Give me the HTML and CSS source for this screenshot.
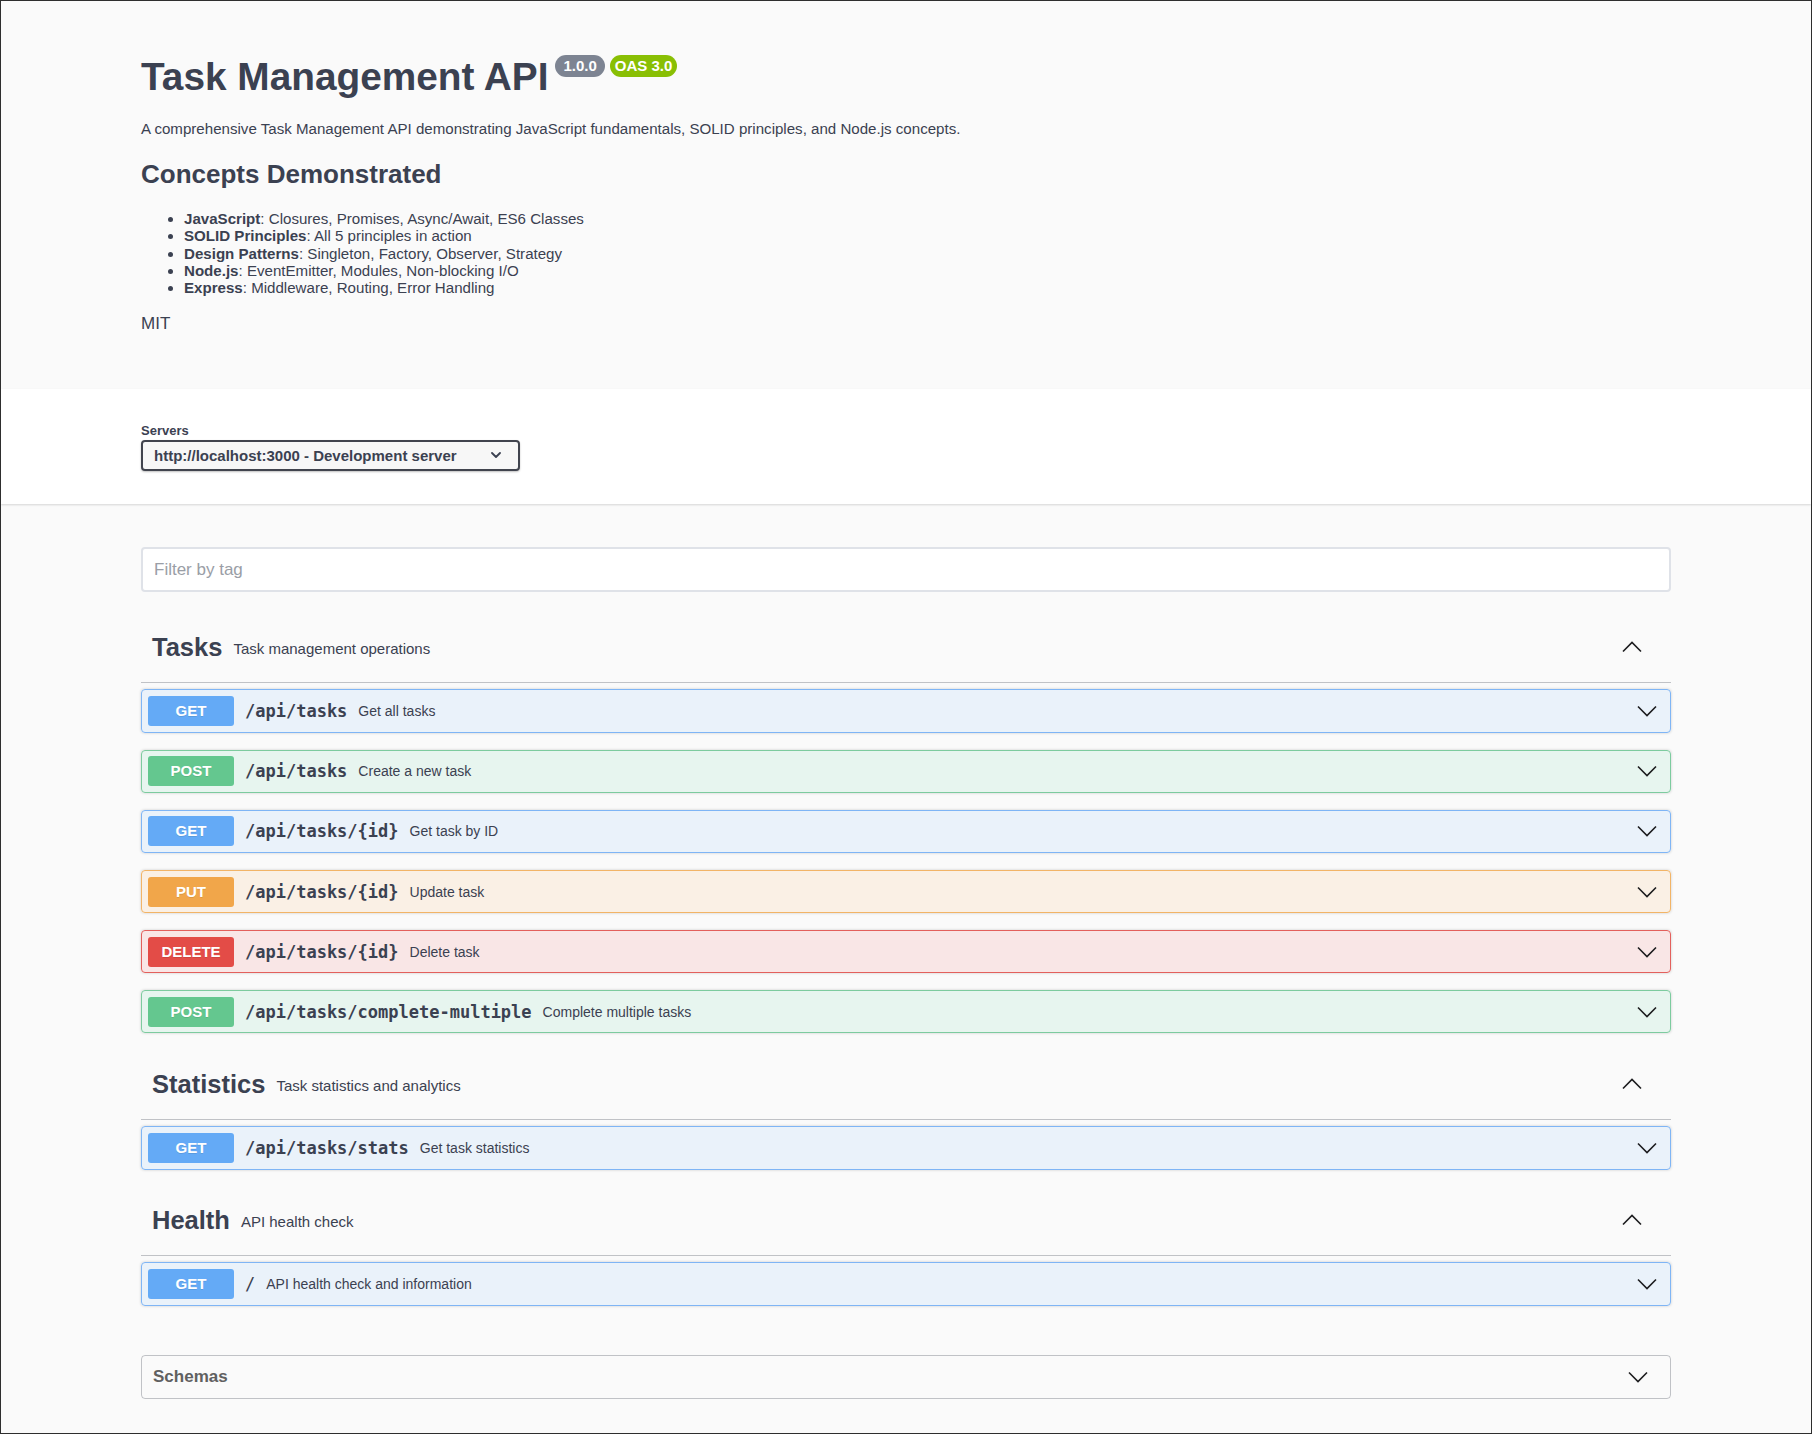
FILE: index.html
```html
<!DOCTYPE html>
<html lang="en">
<head>
<meta charset="utf-8">
<title>Task Management API</title>
<link rel="stylesheet" href="styles.css">
</head>
<body>
<section class="info-block">
  <div class="wrapper">
    <div class="main">
      <h1 class="title">Task Management API<span class="stamps"><span class="stamp ver">1.0.0</span><span class="stamp oas">OAS 3.0</span></span></h1>
    </div>
    <div class="desc">
      <p>A comprehensive Task Management API demonstrating JavaScript fundamentals, SOLID principles, and Node.js concepts.</p>
      <h2>Concepts Demonstrated</h2>
      <ul>
        <li><strong>JavaScript</strong>: Closures, Promises, Async/Await, ES6 Classes</li>
        <li><strong>SOLID Principles</strong>: All 5 principles in action</li>
        <li><strong>Design Patterns</strong>: Singleton, Factory, Observer, Strategy</li>
        <li><strong>Node.js</strong>: EventEmitter, Modules, Non-blocking I/O</li>
        <li><strong>Express</strong>: Middleware, Routing, Error Handling</li>
      </ul>
    </div>
    <div class="license">MIT</div>
  </div>
</section>

<section class="scheme">
  <div class="wrapper">
    <span class="servers-title">Servers</span>
    <div class="select">
      <span>http://localhost:3000 - Development server</span>
      <svg class="sel-arrow" width="10" height="6" viewBox="0 0 10 6"><polyline points="1,1 5,5 9,1" fill="none" stroke="#3b4151" stroke-width="1.8" stroke-linecap="round" stroke-linejoin="round"/></svg>
    </div>
  </div>
</section>

<div class="wrapper content">
  <div class="filter"><input class="filter-input" type="text" placeholder="Filter by tag"></div>

  <section class="tag-section">
    <div class="tag">
      <h3>Tasks</h3>
      <small>Task management operations</small>
      <svg class="arrow" width="20" height="20" viewBox="0 0 20 20"><polyline points="1,14.5 10,5.5 19,14.5" fill="none" stroke="#1d1d1f" stroke-width="1.6"/></svg>
    </div>
    <div class="opblock get"><span class="method">GET</span><span class="path">/api/tasks</span><span class="summary">Get all tasks</span><svg class="arrow" width="20" height="20" viewBox="0 0 20 20"><polyline points="1,5.5 10,14.5 19,5.5" fill="none" stroke="#1d1d1f" stroke-width="1.6"/></svg></div>
    <div class="opblock post"><span class="method">POST</span><span class="path">/api/tasks</span><span class="summary">Create a new task</span><svg class="arrow" width="20" height="20" viewBox="0 0 20 20"><polyline points="1,5.5 10,14.5 19,5.5" fill="none" stroke="#1d1d1f" stroke-width="1.6"/></svg></div>
    <div class="opblock get"><span class="method">GET</span><span class="path">/api/tasks/{id}</span><span class="summary">Get task by ID</span><svg class="arrow" width="20" height="20" viewBox="0 0 20 20"><polyline points="1,5.5 10,14.5 19,5.5" fill="none" stroke="#1d1d1f" stroke-width="1.6"/></svg></div>
    <div class="opblock put"><span class="method">PUT</span><span class="path">/api/tasks/{id}</span><span class="summary">Update task</span><svg class="arrow" width="20" height="20" viewBox="0 0 20 20"><polyline points="1,5.5 10,14.5 19,5.5" fill="none" stroke="#1d1d1f" stroke-width="1.6"/></svg></div>
    <div class="opblock delete"><span class="method">DELETE</span><span class="path">/api/tasks/{id}</span><span class="summary">Delete task</span><svg class="arrow" width="20" height="20" viewBox="0 0 20 20"><polyline points="1,5.5 10,14.5 19,5.5" fill="none" stroke="#1d1d1f" stroke-width="1.6"/></svg></div>
    <div class="opblock post"><span class="method">POST</span><span class="path">/api/tasks/complete-multiple</span><span class="summary">Complete multiple tasks</span><svg class="arrow" width="20" height="20" viewBox="0 0 20 20"><polyline points="1,5.5 10,14.5 19,5.5" fill="none" stroke="#1d1d1f" stroke-width="1.6"/></svg></div>
  </section>

  <section class="tag-section">
    <div class="tag">
      <h3>Statistics</h3>
      <small>Task statistics and analytics</small>
      <svg class="arrow" width="20" height="20" viewBox="0 0 20 20"><polyline points="1,14.5 10,5.5 19,14.5" fill="none" stroke="#1d1d1f" stroke-width="1.6"/></svg>
    </div>
    <div class="opblock get"><span class="method">GET</span><span class="path">/api/tasks/stats</span><span class="summary">Get task statistics</span><svg class="arrow" width="20" height="20" viewBox="0 0 20 20"><polyline points="1,5.5 10,14.5 19,5.5" fill="none" stroke="#1d1d1f" stroke-width="1.6"/></svg></div>
  </section>

  <section class="tag-section">
    <div class="tag">
      <h3>Health</h3>
      <small>API health check</small>
      <svg class="arrow" width="20" height="20" viewBox="0 0 20 20"><polyline points="1,14.5 10,5.5 19,14.5" fill="none" stroke="#1d1d1f" stroke-width="1.6"/></svg>
    </div>
    <div class="opblock get"><span class="method">GET</span><span class="path root">/</span><span class="summary">API health check and information</span><svg class="arrow" width="20" height="20" viewBox="0 0 20 20"><polyline points="1,5.5 10,14.5 19,5.5" fill="none" stroke="#1d1d1f" stroke-width="1.6"/></svg></div>
  </section>

  <section class="models">
    <h4>Schemas</h4>
    <svg class="arrow" width="20" height="20" viewBox="0 0 20 20"><polyline points="1,5.5 10,14.5 19,5.5" fill="none" stroke="#1d1d1f" stroke-width="1.6"/></svg>
  </section>
</div>
</body>
</html>
```

FILE: styles.css
```css
* {
  box-sizing: border-box;
}

html {
  margin: 0;
}

body {
  margin: 0;
  min-height: 100vh;
  background: #fafafa;
  border: 1px solid #2e2e2e;
  font-family: "Liberation Sans", Arial, Helvetica, sans-serif;
  color: #3b4151;
}

.wrapper {
  max-width: 1530px;
  margin: 0 auto;
}

/* ---------- info ---------- */
.info-block {
  padding: 53px 0 55px;
}

.main {
  margin-bottom: 21px;
}

.title {
  margin: 0;
  font-size: 38.8px;
  line-height: 45px;
  font-weight: 700;
  color: #3b4151;
}

.stamps {
  display: inline-flex;
  gap: 5px;
  margin-left: 7px;
  vertical-align: top;
  position: relative;
  top: 1px;
}

.stamp {
  display: inline-block;
  font-size: 15px;
  line-height: 18px;
  font-weight: 700;
  color: #fff;
  padding: 2px 5px;
  border-radius: 57px;
}

.ver {
  background: #7d8492;
  padding: 2px 8px;
}

.oas {
  background: #89bf04;
}

.desc p {
  margin: 0;
  font-size: 15.1px;
  line-height: 17px;
}

.desc h2 {
  margin: 22px 0 0;
  font-size: 26px;
  line-height: 30px;
  font-weight: 700;
}

.desc ul {
  margin: 21px 0 0;
  padding-left: 43px;
  font-size: 15.1px;
  line-height: 17.3px;
}

.desc strong {
  font-weight: 700;
}

.license {
  margin-top: 18px;
  font-size: 17px;
  line-height: 19.5px;
}

/* ---------- servers ---------- */
.scheme {
  background: #fff;
  box-shadow: 0 1px 2px 0 rgba(0, 0, 0, 0.15);
  padding: 34px 0 33px;
}

.servers-title {
  display: block;
  font-size: 13px;
  line-height: 16px;
  font-weight: 700;
}

.select {
  margin-top: 1px;
  width: 379px;
  height: 31px;
  display: flex;
  align-items: center;
  justify-content: space-between;
  padding: 0 17px 0 11px;
  background: #f7f7f7;
  border: 2px solid #41444e;
  border-radius: 4px;
  box-shadow: 0 1px 2px 0 rgba(0, 0, 0, 0.25);
  font-size: 15px;
  font-weight: 700;
  color: #3b4151;
}

.sel-arrow {
  display: block;
}

/* ---------- filter ---------- */
.content {
  padding-top: 43.5px;
  padding-bottom: 32px;
}

.filter {
  margin-bottom: 21px;
}

.filter-input {
  display: block;
  width: 100%;
  height: 45px;
  margin: 0;
  padding: 0 11px;
  border: 2px solid #dfe2e8;
  border-radius: 4px;
  background: #fff;
  font-family: "Liberation Sans", Arial, Helvetica, sans-serif;
  font-size: 17px;
  color: #3b4151;
  outline: none;
}

.filter-input::placeholder {
  color: #9a9ea6;
}

/* ---------- tags ---------- */
.tag {
  display: flex;
  align-items: center;
  height: 70px;
  padding: 0 29px 1px 11px;
  border-bottom: 1px solid rgba(59, 65, 81, 0.3);
  margin-bottom: 6px;
}

.tag h3 {
  margin: 0;
  font-size: 25.5px;
  font-weight: 700;
  line-height: 30px;
}

.tag small {
  flex: 1;
  padding: 0 11px;
  font-size: 15px;
  line-height: 17px;
  position: relative;
  top: 1px;
}

.arrow {
  display: block;
  flex: none;
}

/* ---------- operations ---------- */
.opblock {
  display: flex;
  align-items: center;
  height: 43.5px;
  margin-bottom: 16.6px;
  padding: 0 13px 0 6px;
  border: 1px solid;
  border-radius: 4px;
  box-shadow: 0 0 3px rgba(0, 0, 0, 0.19);
}

.method {
  flex: none;
  min-width: 86px;
  height: 30px;
  line-height: 30px;
  text-align: center;
  border-radius: 3px;
  font-size: 15px;
  font-weight: 700;
  color: #fff;
  text-shadow: 0 1px 0 rgba(0, 0, 0, 0.1);
}

.path {
  padding: 0 11px;
  font-family: "DejaVu Sans Mono", "Liberation Mono", monospace;
  font-size: 17px;
  font-weight: 700;
  color: #3b4151;
}

.path.root {
  font-weight: 400;
}

.summary {
  flex: 1;
  font-size: 14px;
  color: #3b4151;
}

.get {
  background: rgba(97, 175, 254, 0.1);
  border-color: #7fb5f5;
}

.get .method {
  background: #64aaf6;
}

.post {
  background: rgba(73, 204, 144, 0.1);
  border-color: #7dcb9f;
}

.post .method {
  background: #64c78f;
}

.put {
  background: rgba(252, 161, 48, 0.1);
  border-color: #f2b467;
}

.put .method {
  background: #f1a64a;
}

.delete {
  background: rgba(249, 62, 62, 0.1);
  border-color: #e3605c;
}

.delete .method {
  background: #e34c47;
}

/* ---------- models ---------- */
.models {
  margin-top: 49px;
  height: 44px;
  display: flex;
  align-items: center;
  justify-content: space-between;
  padding: 0 22px 0 11px;
  border: 1px solid rgba(59, 65, 81, 0.3);
  border-radius: 4px;
}

.models h4 {
  margin: 0;
  font-size: 17px;
  font-weight: 700;
  color: #606060;
}
```
